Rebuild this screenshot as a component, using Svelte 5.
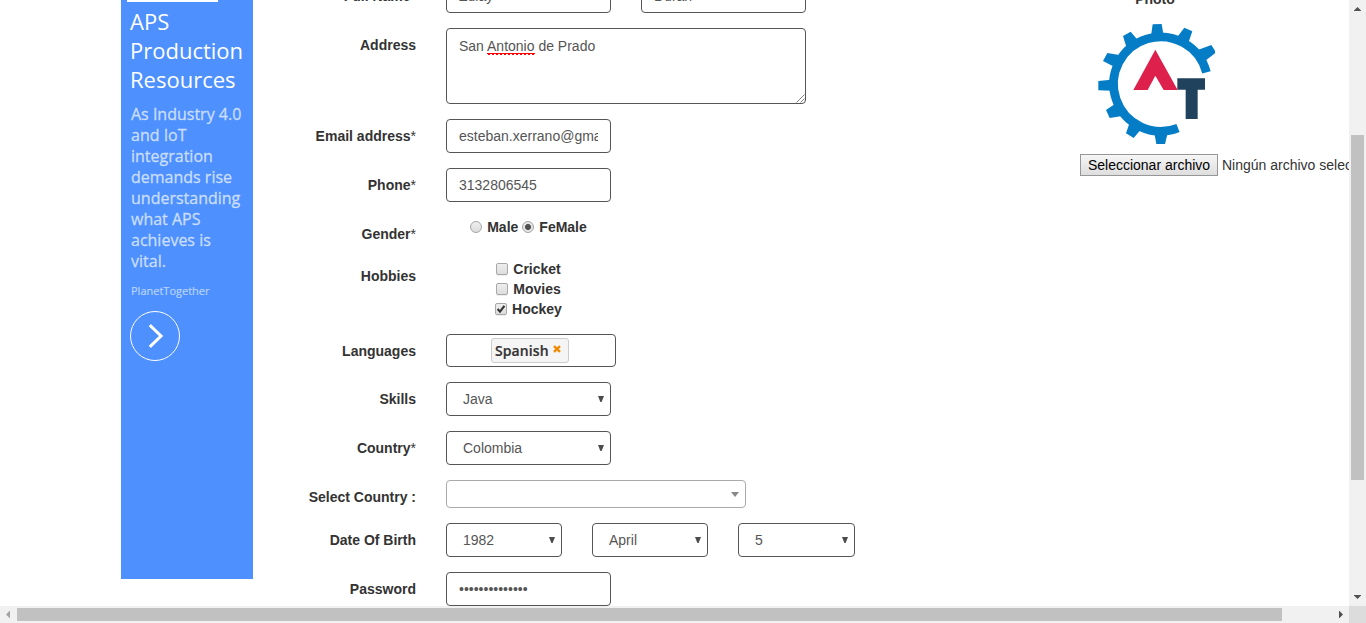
<script>
  const hobbies = [
    { name: 'Cricket', on: false },
    { name: 'Movies', on: false },
    { name: 'Hockey', on: true }
  ];
  const birth = ['1982', 'April', '5'];
</script>

{#snippet label(text, required = false)}
  <div class="label">{text}{#if required}<span class="req">*</span>{/if}</div>
{/snippet}

{#snippet select(value, size = '')}
  <div class="control select {size}">
    <span>{value}</span>
    <svg width="6" height="6" viewBox="0 0 6 6"><path d="M0 0H6L3.6 6H2.4Z" fill="#4c4c4c" /></svg>
  </div>
{/snippet}

<div class="window">
  <div class="page">
    <aside class="ad">
      <div class="bar"></div>
      <h2>APS<br />Production<br />Resources</h2>
      <p>As Industry 4.0<br />and IoT<br />integration<br />demands rise<br />understanding<br />what APS<br />achieves is<br />vital.</p>
      <small>PlanetTogether</small>
      <svg class="go" width="50" height="50" viewBox="0 0 50 50" fill="none" stroke="#fff">
        <circle cx="25" cy="25" r="24.5" />
        <path d="M19.8 14.2L31 25L19.8 35.8" stroke-width="3" />
      </svg>
    </aside>

    <main class="form">
      <div class="row">
        {@render label('Full Name', true)}
        <div class="pair">
          <div class="control">Zulay</div>
          <div class="control">Duran</div>
        </div>
      </div>
      <div class="row">
        {@render label('Address')}
        <div class="control area">
          <span>San <span class="typo">Antonio</span> de Prado</span>
          <svg width="9" height="9" viewBox="0 0 9 9" stroke="#666" stroke-width="0.8"><path d="M0.5 8.5L8.5 0.5M4.5 8.5L8.5 4.5" /></svg>
        </div>
      </div>
      <div class="row">
        {@render label('Email address', true)}
        <div class="control"><span class="clip">esteban.xerrano@gmail.com</span></div>
      </div>
      <div class="row">
        {@render label('Phone', true)}
        <div class="control">3132806545</div>
      </div>
      <div class="row">
        {@render label('Gender', true)}
        <div class="options">
          <div class="option"><i class="radio"></i><b>Male</b><i class="radio on"></i><b>FeMale</b></div>
        </div>
      </div>
      <div class="row">
        {@render label('Hobbies')}
        <div class="options">
          {#each hobbies as hobby}
            <div class="option">
              <i class="check">
                {#if hobby.on}
                  <svg width="10" height="10" viewBox="0 0 10 10"><path d="M1.6 5L4 7.6L8.4 1.8" fill="none" stroke="#333" stroke-width="2.1" /></svg>
                {/if}
              </i><b>{hobby.name}</b>
            </div>
          {/each}
        </div>
      </div>
      <div class="row">
        {@render label('Languages')}
        <div class="control tags">
          <div class="tag">
            <span>Spanish</span>
            <svg width="8" height="8" viewBox="0 0 8 8"><path d="M1 1.2L7 6.8M7 1.2L1 6.8" stroke="#f08a00" stroke-width="2.4" /></svg>
          </div>
        </div>
      </div>
      <div class="row">
        {@render label('Skills')}
        {@render select('Java')}
      </div>
      <div class="row">
        {@render label('Country', true)}
        {@render select('Colombia')}
      </div>
      <div class="row">
        {@render label('Select Country :')}
        <div class="control picker">
          <svg width="8" height="5" viewBox="0 0 8 5"><path d="M0 0H8L4 5Z" fill="#888" /></svg>
        </div>
      </div>
      <div class="row">
        {@render label('Date Of Birth')}
        <div class="pair">
          {#each birth as part}
            {@render select(part, 'short')}
          {/each}
        </div>
      </div>
      <div class="row">
        {@render label('Password')}
        <div class="control">••••••••••••••</div>
      </div>
    </main>

    <section class="photo">
      <div class="photo-title">Photo</div>
      <svg class="logo" width="119" height="120" viewBox="78 72 357 360">
        <path d="M409.3 217.2A141.5 141.5 0 1 0 324 384" fill="none" stroke="#057dc6" stroke-width="26" />
        <g fill="#057dc6">
          <path d="M248 73L275 72L281 108H243Z" />
          <path d="M343 83L367 94L356 126L320 113Z" />
          <path d="M385 149L424 135L438 157L404 184Z" />
          <path d="M182 95L205 122L170 144L159 108Z" />
          <path d="M112 159L152 166L128 198L99 183Z" />
          <path d="M85 243L123 239L126 272L85 271Z" />
          <path d="M108 330L138 310L157 348L119 354Z" />
          <path d="M179 368L214 387L191 414L168 400Z" />
          <path d="M253 398L293 399L285 432H259Z" />
        </g>
        <path d="M256 149L323 270H281L256 227L233 270H190Z" fill="#de204c" />
        <path d="M322 235H405V269H383V357H347V269H322Z" fill="#21425c" />
      </svg>
      <div class="file"><span class="button">Seleccionar archivo</span><span class="none">Ningún archivo seleccionado</span></div>
    </section>
  </div>

  <div class="vbar">
    <svg width="17" height="17"><path d="M5 11V10.5L8.5 7L12 10.5V11Z" fill="#505050" /></svg>
    <div class="thumb"></div>
    <svg class="end" width="17" height="17"><path d="M5 6V6.5L8.5 10L12 6.5V6Z" fill="#505050" /></svg>
  </div>
  <div class="hbar">
    <svg width="17" height="17"><path d="M10 5H9.5L6 8.5L9.5 12H10Z" fill="#a3a3a3" /></svg>
    <div class="thumb"></div>
    <svg class="end" width="17" height="17"><path d="M7 5H7.5L11 8.5L7.5 12H7Z" fill="#505050" /></svg>
  </div>
  <div class="corner"></div>
</div>

<style>
  :global(body) { margin: 0; background: #fff; overflow: hidden; }
  .window {
    width: 1366px; height: 623px; display: grid; overflow: hidden;
    grid-template-columns: 1349px 17px; grid-template-rows: 606px 17px;
    font: 14px/20px "Liberation Sans", Arial, sans-serif; color: #333;
  }
  .window :global(*) { box-sizing: border-box; }
  svg { display: block; flex: none; }
  .page { display: flex; align-items: flex-start; overflow: hidden; }

  .ad {
    flex: none; width: 132px; height: 579px; margin-left: 121px; padding-left: 9px;
    background: #4d90fe; color: #fff; font-family: "Open Sans", sans-serif; white-space: nowrap;
  }
  .bar { width: 91px; height: 2px; margin-left: -3px; background: #fff; }
  h2 { margin: 5px 0 0; font-weight: 400; font-size: 22px; line-height: 29px; }
  p {
    margin: 10px 0 0 1px; font-size: 16px; line-height: 21px; color: #cadeff;
    -webkit-text-stroke: 0.3px #cadeff;
  }
  small {
    display: block; margin: 11px 0 0 1px; font-size: 11px; line-height: 16px; color: #b8d3ff;
    -webkit-text-stroke: 0.2px #b8d3ff;
  }
  .go { margin-top: 12px; }

  .form { flex: none; width: 827px; margin-top: -21px; }
  .row { display: flex; align-items: flex-start; margin-bottom: 15px; }
  .label { flex: none; width: 163px; margin-right: 30px; padding-top: 7px; text-align: right; font-weight: 700; }
  .req { font-weight: 400; }
  .pair { display: flex; gap: 30px; }
  .control {
    display: flex; align-items: center; width: 165px; height: 34px; padding: 0 12px;
    border: 1px solid #555; border-radius: 4px; background: #fff; color: #555; white-space: pre;
  }
  .clip { min-width: 0; overflow: hidden; }
  .area { width: 360px; height: 76px; padding: 7px 0 0 12px; align-items: flex-start; justify-content: space-between; }
  .area svg { align-self: flex-end; }
  .typo {
    padding-bottom: 1px;
    background: conic-gradient(from -45deg at 50% 100%, #f00 90deg, transparent 0) 0 100% / 4px 2px repeat-x;
  }
  .select { padding: 0 6px 0 16px; justify-content: space-between; }
  .short { width: 116px; }
  .short:last-child { width: 117px; }
  .picker { width: 300px; height: 28px; padding: 0 6px; justify-content: flex-end; border-color: #aaa; }
  .options { width: 165px; }
  .option { display: flex; align-items: center; justify-content: center; height: 20px; }
  .option b { margin-left: 5px; }
  .option b + i { margin-left: 4px; }
  .radio {
    width: 12px; height: 12px; border: 1px solid #a5a5a5; border-radius: 50%;
    background: linear-gradient(#eee, #ddd);
  }
  .radio.on { background: radial-gradient(circle, #505050 0 2.6px, #e4e4e4 3.4px); }
  .check {
    width: 12px; height: 12px; border: 1px solid #a8a8a8; border-radius: 2px;
    background: linear-gradient(#eee, #ddd); box-shadow: 0 1px 0 #eee;
  }
  .tags { width: 170px; height: 33px; padding: 0 0 0 44px; }
  .tag {
    display: flex; width: 78px; height: 25px; padding: 0 0 0 3px; border: 1px solid #ccc; border-radius: 3px;
    background: #f5f5f5; color: #333; font: 600 14px/24px "Open Sans", sans-serif; letter-spacing: 0.1px;
    -webkit-text-stroke: 0.2px #333;
  }
  .tag span { width: 54px; }
  .tag svg { margin: 6px 0 0 4px; }

  .photo { flex: none; width: 300px; margin-top: -11px; white-space: nowrap; }
  .photo-title { width: 150px; text-align: center; font-weight: 700; }
  .logo { margin: 15px 0 0 16px; }
  .file { display: flex; align-items: center; height: 22px; margin-top: 10px; gap: 4px; }
  .button {
    flex: none; width: 138px; height: 22px; border: 1px solid #979797; background: linear-gradient(#f6f6f6, #dedede);
    color: #000; text-align: center;
  }

  .vbar { display: flex; flex-direction: column; align-items: center; background: #f1f1f1; }
  .vbar .thumb { width: 13px; height: 345px; margin-top: 118px; background: #c1c1c1; }
  .vbar .end { margin-top: auto; }
  .hbar { display: flex; align-items: center; background: #f1f1f1; }
  .hbar .thumb { width: 1265px; height: 13px; background: #c1c1c1; }
  .hbar .end { margin-left: auto; }
  .corner { background: #dcdcdc; }
</style>
